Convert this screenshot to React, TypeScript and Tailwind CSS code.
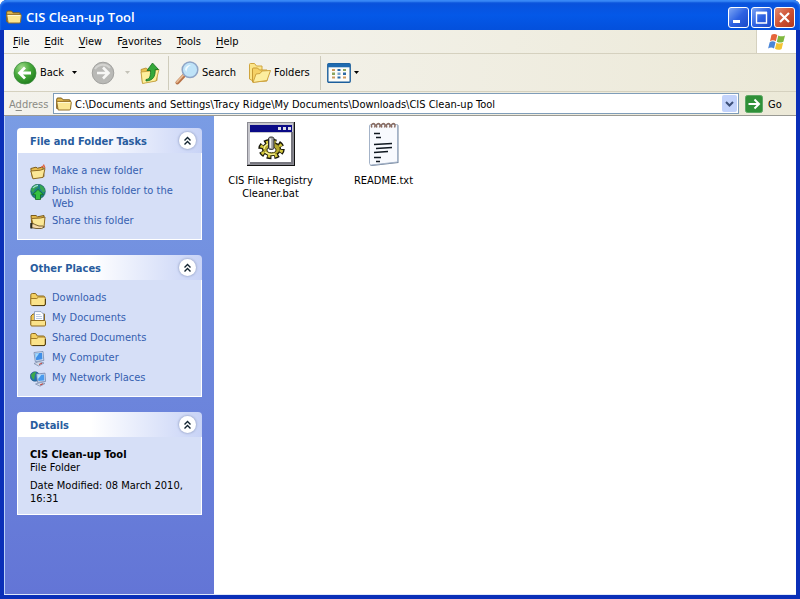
import { useState } from 'react';
import type { ReactNode } from 'react';

interface IconProps {
  className?: string;
}

const PATH = 'C:\\Documents and Settings\\Tracy Ridge\\My Documents\\Downloads\\CIS Clean-up Tool';

function FolderIcon({ className = 'size-4' }: IconProps) {
  return (
    <svg viewBox="0 0 16 16" className={className} aria-hidden="true">
      <path d="M.7 12.5V3.2c0-.8.4-1.2 1.2-1.2h3.6l1.6 1.8h6c.8 0 1.2.4 1.2 1.2v7.5z" fill="#e3b94a" stroke="#7a5c1c" />
      <path d="M2.2 14 .8 6.4c0-.6.3-1 1-1h12.4c.8 0 1.2.4 1.1 1.1L14.5 13c-.1.7-.5 1-1.2 1z" fill="#fbe793" stroke="#94702a" />
      <path d="M2 6.5h12" stroke="#fff9d2" />
    </svg>
  );
}

function PlainFolderIcon() {
  return (
    <svg viewBox="0 0 16 16" className="size-4" aria-hidden="true">
      <path d="M.8 12.8V4.2C.8 3 1.4 2.5 2.4 2.5h3.2L7.4 5h5.8c1 0 1.6.5 1.6 1.500v6.300z" fill="#f3cf62" stroke="#8a681d" />
      <path d="M2 14.500c-.8 0-1.200-.5-1.200-1.200V7.500h6L8.600 6h5.500c.8 0 1.200.4 1.200 1.100v6c0 .9-.5 1.400-1.300 1.400z" fill="#fbe38a" stroke="#a37d28" />
      <path d="M2.500 14.600H14c.8 0 1.400-.6 1.400-1.400V8" fill="none" stroke="#4d3a10" />
    </svg>
  );
}

function NewFolderIcon() {
  return (
    <svg viewBox="0 0 16 16" className="size-4" aria-hidden="true">
      <path d="M.8 4.500 6 3.200l1.500 1 5.500-1.200L14 12.500 2.500 14z" fill="#e6bb4c" stroke="#7b5b1b" />
      <path d="m.8 7 9.500-.8L15 4.500l-2 8.900L3 14.800z" fill="#fbe796" stroke="#8d6a24" />
      <path d="m11 3.500 3-2M13.500.5l1.500 3.500" fill="none" stroke="#e0603a" strokeWidth="1.200" />
    </svg>
  );
}

function PublishIcon() {
  return (
    <svg viewBox="0 0 16 16" className="size-4" aria-hidden="true">
      <circle cx="8" cy="7.500" r="7.300" fill="#1f7f86" stroke="#14564a" strokeWidth=".6" />
      <path d="M1 6c1-3 3-5 6-5.400L8 3 5 5 3 9zM10 1c3 1 5 3.500 5 6.500l-2 1-3-4z" fill="#37a651" />
      <path d="M3 4c1.500-2 3-2.500 5-2.700" fill="none" stroke="#a8dce8" strokeWidth="1.200" />
      <path d="m8 5.500 5.500 5.200h-3V15.500h-5v-4.800h-3z" fill="#35c23f" stroke="#116a22" strokeWidth=".8" />
    </svg>
  );
}

function ShareIcon() {
  return (
    <svg viewBox="0 0 16 16" className="size-4" aria-hidden="true">
      <path d="M1 1.500h5l1.500 1.300L14 1.500l-.5 10L2 12z" fill="#e6bb4c" stroke="#7b5b1b" />
      <path d="m1.500 4.500 9-.5 4.500-1-1 10-10 .5z" fill="#fbe796" stroke="#8d6a24" />
      <path d="M1 10.500c1-1 3-1 4 0l4 1.500h4l1.500 1-3 1.500H6L1 13.500z" fill="#f4d9a8" stroke="#5a4315" strokeWidth=".8" />
      <path d="M.3 9v5.500h2V9z" fill="#2b2b20" />
    </svg>
  );
}

function DocumentsIcon() {
  return (
    <svg viewBox="0 0 16 16" className="size-4" aria-hidden="true">
      <path d="M1 14V5l2-2h11.500v11z" fill="#eec65b" stroke="#8a681d" />
      <path d="M4.500 12V.6h6.500l2.500 2.500V12z" fill="#fff" stroke="#7d93b8" strokeWidth=".8" />
      <path d="M6 3.500h4.500M6 5.500h6M6 7.500h6" stroke="#b9c9e2" />
      <path d="M1.800 15C1 15 .8 14.500.8 13.800V9.500h13.800c.6 0 .9.400.9 1v3.500c0 .7-.5 1-1.100 1z" fill="#fbe38a" stroke="#8f6b20" />
    </svg>
  );
}

function ComputerIcon() {
  return (
    <svg viewBox="0 0 16 16" className="size-4" aria-hidden="true">
      <path d="m4 1.500 9-1 .8 9-8.500 1z" fill="#dce6f5" stroke="#7186ab" strokeWidth=".8" />
      <path d="m5 2.600 7-.8.500 6.500-6.500.9z" fill="#3f8fe8" />
      <path d="m5.200 2.600 4-.4-3.500 5z" fill="#a5dafa" />
      <path d="m4 12.500 5-2 5 1.500-5.500 3z" fill="#d3d9e6" stroke="#8090b0" strokeWidth=".8" />
      <path d="m9 13.500 3-1.400" stroke="#c03a35" />
    </svg>
  );
}

function NetworkIcon() {
  return (
    <svg viewBox="0 0 16 16" className="size-4" aria-hidden="true">
      <circle cx="5" cy="5.500" r="4.800" fill="#246fae" stroke="#184a6d" strokeWidth=".5" />
      <path d="M1 4c1-2 3-3.500 5-3l-1 3-1 5-2-2z" fill="#3eaa49" />
      <path d="m6.500 3 8.500-.8.500 8.300-8 .8z" fill="#dce6f5" stroke="#6b7fa8" strokeWidth=".8" />
      <path d="m7.500 4 6.500-.6.400 6-6 .7z" fill="#4a9bee" />
      <path d="m7.600 4 3.800-.3L8.200 8z" fill="#b5e2fb" />
      <path d="m5.500 13 5-1.500 4.500 1-5 2.700z" fill="#d3d9e6" stroke="#8090b0" strokeWidth=".8" />
      <path d="m10 14 3-1.200" stroke="#c03a35" />
    </svg>
  );
}

function BackIcon() {
  return (
    <svg viewBox="0 0 24 24" className="size-6" aria-hidden="true">
      <defs>
        <radialGradient id="backFill" cx=".35" cy=".25" r=".8">
          <stop offset="0" stopColor="#9ed989" />
          <stop offset=".5" stopColor="#46a83a" />
          <stop offset="1" stopColor="#1f7d1c" />
        </radialGradient>
      </defs>
      <circle cx="12" cy="12" r="11" fill="url(#backFill)" stroke="#37893a" strokeWidth=".8" />
      <path d="M18 12H7M12 6.500 6.500 12l5.500 5.500" fill="none" stroke="#fff" strokeWidth="2.800" />
    </svg>
  );
}

function ForwardIcon() {
  return (
    <svg viewBox="0 0 24 24" className="size-6" aria-hidden="true">
      <circle cx="12" cy="12" r="10.800" fill="#b9b9b6" stroke="#a2a29f" />
      <path d="M4 8c3-5 11-6 15-1" fill="none" stroke="#d3d3d0" strokeWidth="2" />
      <path d="M6 12h11M12 6.500l5.500 5.500-5.500 5.500" fill="none" stroke="#f7f7f5" strokeWidth="2.600" />
    </svg>
  );
}

function UpIcon() {
  return (
    <svg viewBox="0 0 20 22" className="h-6 w-5" aria-hidden="true">
      <path d="M1 7.500 6 6l2 1.500 9-1v12L2.500 21z" fill="#e9c14e" stroke="#b48a2b" strokeWidth=".8" />
      <path d="m1 10 10-1 8-1.500-3 11.500L2.500 21.500z" fill="#fdf09b" stroke="#c29a36" strokeWidth=".8" />
      <path d="M6 17.500c4-.5 4.500-3 4.500-9H7L12.500 1l6 6.500h-3.300c.2 7-2 11-9.200 11.500z" fill="#35a83a" stroke="#176d20" strokeWidth=".8" />
    </svg>
  );
}

function SearchIcon() {
  return (
    <svg viewBox="0 0 24 24" className="size-6" aria-hidden="true">
      <path d="m9.500 14-7 7.500" stroke="#b87348" strokeWidth="4" strokeLinecap="round" />
      <path d="m9 13.500-7 7.500" stroke="#eabf98" strokeWidth="1.800" strokeLinecap="round" />
      <circle cx="15" cy="8.800" r="7.800" fill="#bfe3f8" stroke="#8fa5c6" strokeWidth="1.500" />
      <path d="M10 8.500c.5-3 3-4.700 6-4.500-2 1-4.500 3.500-4.500 7z" fill="#f2fbff" />
    </svg>
  );
}

function FoldersIcon() {
  return (
    <svg viewBox="0 0 24 22" className="h-[22px] w-6" aria-hidden="true">
      <path d="M1.500 17V2.500c0-.8.500-1 1-1h4l2 2.500h5.500v4L5 19z" fill="#fbe58a" stroke="#d0a53e" />
      <path d="M4.500 20V7c0-.8.500-1 1-1h4l2 2h7.500v11z" fill="#f5d165" stroke="#c79b35" />
      <path d="M5 20.500 8 12l4-.5 2-2.500 8.500-.5-3.500 10z" fill="#fdeea0" stroke="#cfa43f" />
    </svg>
  );
}

function ViewsIcon() {
  return (
    <svg viewBox="0 0 24 20" className="h-5 w-6" aria-hidden="true">
      <rect x=".8" y=".8" width="22.400" height="18.400" rx="1" fill="#fdfdf8" stroke="#1c5f9c" strokeWidth="1.400" />
      <path d="M1 2.500h22" stroke="#1f6bb0" strokeWidth="3.600" />
      <path d="M5 6h3v2H5zM16 13.500h3v2h-3zM5 13.500h3v2H5z" fill="#cf9a5e" />
      <path d="M10.500 6h3v2h-3zM16 9.500h3v2.500h-3zM10.500 13.500h3v2h-3z" fill="#2c6aa5" />
      <path d="M16 6h3v2h-3zM5 9.500h3v2.500H5z" fill="#8ba65e" />
      <path d="M10.500 9.500h3v2.500h-3z" fill="#7aa6cf" />
    </svg>
  );
}

function WindowsFlag() {
  return (
    <svg viewBox="0 0 20 18" className="h-[18px] w-5" aria-hidden="true">
      <path d="M4.500 1.800C6.500.5 8.500.700 10.300 1.900L8.800 8.200C7 7 5 7 3 8.200z" fill="#e5653a" />
      <path d="M11.300 2.400c2 1.200 4.200 1.300 6.700.1l-1.600 6.200c-2.300 1.200-4.500 1.200-6.600 0z" fill="#7fb83f" />
      <path d="M2.700 9.200c2-1.200 4-1.200 5.800 0L7 15.400c-1.900-1.200-3.900-1.200-5.900 0z" fill="#4a86d8" />
      <path d="M9.500 9.700c2 1.200 4.300 1.200 6.600.1l-1.500 6.100c-2.300 1.200-4.500 1.200-6.600-.1z" fill="#f3c433" />
    </svg>
  );
}

function BatchFileIcon() {
  return (
    <svg viewBox="0 0 48 48" className="size-12" aria-hidden="true" shapeRendering="crispEdges">
      <path d="M0 2h48v44H0z" fill="#111" />
      <path d="M0 2h47v43H0z" fill="#8b8b93" />
      <path d="M1 3h45v41H1z" fill="#c6c6cc" />
      <path d="M3 5h42v7H3z" fill="#0a0a86" />
      <path d="M31 7h3v3h-3zM36 7h3v3h-3zM41 7h3v3h-3z" fill="#dcdce4" />
      <path d="M3 13h41v29H3z" fill="#fff" />
      <path d="M44 12h2v32H3v-2h41z" fill="#77777f" />
      <g shapeRendering="auto" fill="none">
        <ellipse cx="24.500" cy="29" rx="10.500" ry="7.500" stroke="#17160a" strokeWidth="5.500" strokeDasharray="4.400 2.700" />
        <ellipse cx="24.500" cy="29" rx="9" ry="6.500" fill="#b5a92e" stroke="#26230a" strokeWidth="1.500" />
        <ellipse cx="24.500" cy="29" rx="10.200" ry="7.200" stroke="#d3c73c" strokeWidth="3.400" strokeDasharray="2.600 4.340" strokeDashoffset="-.9" />
        <path d="M17 29c0-2.500 2-4.500 5-5M18 32c2 2 6 2.800 10 2" stroke="#f5ee8c" strokeWidth="1.500" />
        <ellipse cx="24.500" cy="30" rx="4.500" ry="2.800" fill="#fff" stroke="#3a3510" />
        <path d="M21.500 18.500c0-2 5.500-2 5.500 0V28c0 2-5.500 2-5.500 0z" fill="#9c9c9c" stroke="#2a2a2a" />
        <path d="M23.500 18.500V28" stroke="#f4f4f4" strokeWidth="1.500" />
      </g>
    </svg>
  );
}

function TextFileIcon() {
  return (
    <svg viewBox="0 0 48 48" className="size-12" aria-hidden="true">
      <path d="m10 6 27-1.500c1 0 1.500.500 1.500 1.500v37L12 46c-1.500 0-2-1-2-2z" fill="#71839b" />
      <path d="M9.500 6c0-1 .5-1.500 1.500-1.500h25c1 0 1.500.500 1.500 1.500v36l-26 3c-1.300 0-2-.5-2-1.500z" fill="#f8fafe" stroke="#a4b3c8" />
      <path
        d="M12 7.500c-1.500-2 0-4 1.500-4s2 2 1 4M17 7.500c-1.500-2 0-4 1.500-4s2 2 1 4M22 7.500c-1.500-2 0-4 1.500-4s2 2 1 4M27 7.500c-1.500-2 0-4 1.500-4s2 2 1 4M32 7.500c-1.500-2 0-4 1.500-4s2 2 1 4"
        fill="none"
        stroke="#8b6d62"
        strokeWidth="1.500"
      />
      <path d="M14 13.500h6M16 17.500h5M14 24.500l18-1M16 28.500l16-1M14 32.500l14-1M14 37.500h7M16 41.500h4" stroke="#101820" strokeWidth="1.300" />
    </svg>
  );
}

function Caret({ className = 'text-black' }: IconProps) {
  return (
    <svg viewBox="0 0 5 3" className={`h-[3px] w-[5px] ${className}`} aria-hidden="true">
      <path d="M0 0h5L2.500 3z" fill="currentColor" />
    </svg>
  );
}

function MenuItem({ label, hot }: { label: string; hot: number }) {
  return (
    <button type="button" className="h-5">
      {label.slice(0, hot)}
      <span className="underline underline-offset-2">{label[hot]}</span>
      {label.slice(hot + 1)}
    </button>
  );
}

function CaptionButton({ label, close, children }: { label: string; close?: boolean; children: ReactNode }) {
  return (
    <button
      type="button"
      aria-label={label}
      className={`size-[21px] rounded-[3px] border border-white flex items-center justify-center bg-linear-to-br ${
        close ? 'from-[#e08a70] via-[#cf5233] to-[#b0391f]' : 'from-[#7fa5f3] via-[#2e62e2] to-[#1a49c8]'
      }`}
    >
      <svg viewBox="0 0 19 19" className="size-[19px]" fill="none" stroke="#fff" aria-hidden="true">
        {children}
      </svg>
    </button>
  );
}

function Panel({ title, children }: { title: string; children: ReactNode }) {
  const [open, setOpen] = useState(true);

  return (
    <section>
      <div className="flex h-[25px] items-center justify-between rounded-t-[4px] bg-linear-to-r from-white from-40% to-[#c8d3f6] pl-[13px] pr-[6px]">
        <h2 className="pt-[2px] font-bold text-[#285c9e]">{title}</h2>
        <button
          type="button"
          aria-label={`Toggle ${title}`}
          aria-expanded={open}
          onClick={() => setOpen(!open)}
          className="flex size-[17px] items-center justify-center rounded-full bg-white shadow-[0_0_2px_1px_#a9b5d6]"
        >
          <svg viewBox="0 0 9 10" className="h-[10px] w-[9px]" fill="none" stroke="#10222f" strokeWidth="1.400" aria-hidden="true">
            <path d="m1.500 4.500 3-3 3 3M1.500 8.500l3-3 3 3" />
          </svg>
        </button>
      </div>
      {open && <div className="border border-t-0 border-white bg-[#d6dff7] px-3 pt-[11px] pb-[9px]">{children}</div>}
    </section>
  );
}

function TaskList({ items }: { items: { label: string; icon: ReactNode }[] }) {
  return (
    <ul className="flex flex-col gap-1">
      {items.map((item) => (
        <li key={item.label}>
          <a href="#" className="flex min-h-4 items-start gap-[6px] text-[#3560b0]">
            <span className="shrink-0">{item.icon}</span>
            <span className="pr-4">{item.label}</span>
          </a>
        </li>
      ))}
    </ul>
  );
}

const folderTasks = [
  { label: 'Make a new folder', icon: <NewFolderIcon /> },
  { label: 'Publish this folder to the Web', icon: <PublishIcon /> },
  { label: 'Share this folder', icon: <ShareIcon /> },
];

const otherPlaces = [
  { label: 'Downloads', icon: <PlainFolderIcon /> },
  { label: 'My Documents', icon: <DocumentsIcon /> },
  { label: 'Shared Documents', icon: <PlainFolderIcon /> },
  { label: 'My Computer', icon: <ComputerIcon /> },
  { label: 'My Network Places', icon: <NetworkIcon /> },
];

const files = [
  { label: 'CIS File+Registry Cleaner.bat', icon: <BatchFileIcon /> },
  { label: 'README.txt', icon: <TextFileIcon /> },
];

export default function App() {
  const [address, setAddress] = useState(PATH);

  return (
    <div className="flex min-h-screen flex-col rounded-t-[7px] bg-[#0a2fb8] font-['DejaVu_Sans_Condensed','DejaVu_Sans',sans-serif] text-[11px] leading-[13px] text-black">
      <header className="flex h-[30px] items-center gap-1 rounded-t-[7px] bg-linear-to-b from-[#0a50d8] via-[#0458e8] to-[#0350dc] pl-[6px] pr-[5px] pt-1 shadow-[inset_0_2px_2px_#3c8cf8]">
        <FolderIcon />
        <h1 className="flex-1 text-[13px] leading-4 font-semibold text-white font-['Open_Sans',sans-serif]">CIS Clean-up Tool</h1>
        <div className="flex gap-[2px]">
          <CaptionButton label="Minimize">
            <path d="M4 13.500h7" strokeWidth="3" />
          </CaptionButton>
          <CaptionButton label="Maximize">
            <path d="M4 4.500h11M4.500 4v11h10V4" strokeWidth="1.400" />
            <path d="M4 5h11" strokeWidth="2.500" />
          </CaptionButton>
          <CaptionButton label="Close" close>
            <path d="m5 5 9 9M14 5l-9 9" strokeWidth="2.200" />
          </CaptionButton>
        </div>
      </header>

      <div className="mx-1 mb-1 flex flex-1 flex-col border-b border-[#dfe8fb] bg-[#efecdf]">
        <div className="flex h-6 items-stretch border-b border-[#d5d1bf] bg-linear-to-r from-[#f7f7f4] to-[#ece9d8]">
          <nav className="flex flex-1 items-center gap-[15px] pl-[9px]">
            <MenuItem label="File" hot={0} />
            <MenuItem label="Edit" hot={0} />
            <MenuItem label="View" hot={0} />
            <MenuItem label="Favorites" hot={1} />
            <MenuItem label="Tools" hot={0} />
            <MenuItem label="Help" hot={0} />
          </nav>
          <div className="flex w-10 items-center justify-center border-l border-[#d5d1bf] bg-white">
            <WindowsFlag />
          </div>
        </div>

        <div className="flex h-[38px] items-center border-b border-[#d5d1bf] bg-linear-to-r from-[#f6f5f1] to-[#ece9d8] pl-[9px]">
          <button type="button" className="flex items-center gap-[3px]">
            <BackIcon />
            Back
          </button>
          <button type="button" aria-label="Back history" className="ml-2">
            <Caret />
          </button>
          <button type="button" aria-label="Forward" className="ml-[14px]">
            <ForwardIcon />
          </button>
          <button type="button" aria-label="Forward history" className="ml-[10px]">
            <Caret className="text-[#c4c2b8]" />
          </button>
          <button type="button" aria-label="Up" className="ml-[10px]">
            <UpIcon />
          </button>
          <div className="ml-2 h-[34px] w-px bg-[#cfccbc]" />
          <button type="button" className="ml-[6px] flex items-center gap-[3px]">
            <SearchIcon />
            Search
          </button>
          <button type="button" className="ml-3 flex items-center gap-[2px]">
            <FoldersIcon />
            Folders
          </button>
          <div className="ml-[10px] h-[34px] w-px bg-[#cfccbc]" />
          <button type="button" aria-label="Views" className="ml-[6px] flex items-center gap-[3px]">
            <ViewsIcon />
            <Caret />
          </button>
        </div>

        <div className="flex h-6 items-center border-b border-[#9a9a94] bg-linear-to-r from-[#f3f2ec] to-[#ece9d8] pl-[5px]">
          <label htmlFor="address" className="w-11 pt-px text-[#8b8b84]">
            A<span className="underline underline-offset-2">d</span>dress
          </label>
          <div className="flex h-[21px] flex-1 items-center border border-[#7f9db9] bg-white pl-[2px] pr-px">
            <FolderIcon />
            <input
              id="address"
              type="text"
              value={address}
              onChange={(e) => setAddress(e.target.value)}
              className="ml-[3px] min-w-0 flex-1 pt-[2px] outline-none"
            />
            <button type="button" aria-label="Address history" className="flex h-[17px] w-[15px] items-center justify-center rounded-[2px] bg-[#c3d3fb]">
              <svg viewBox="0 0 9 6" className="h-[6px] w-[9px]" fill="none" stroke="#3c4f78" strokeWidth="2" aria-hidden="true">
                <path d="m1 1 3.500 3.500L8 1" />
              </svg>
            </button>
          </div>
          <button type="button" className="ml-[6px] flex w-[51px] items-center gap-[5px]">
            <svg viewBox="0 0 18 18" className="size-[18px]" aria-hidden="true">
              <rect x=".5" y=".5" width="17" height="17" rx="2" fill="#2f9038" stroke="#5da765" />
              <path d="M3.500 9H14M9.500 4.500 14 9l-4.500 4.500" fill="none" stroke="#fff" strokeWidth="2" />
            </svg>
            <span className="pt-px">Go</span>
          </button>
        </div>

        <div className="flex flex-1">
          <aside className="flex w-[210px] shrink-0 flex-col gap-[15px] border-l border-[#b9d0f8] bg-linear-to-b from-[#7a9ce4] to-[#6375d6] px-3 pt-3">
            <Panel title="File and Folder Tasks">
              <TaskList items={folderTasks} />
            </Panel>
            <Panel title="Other Places">
              <TaskList items={otherPlaces} />
            </Panel>
            <Panel title="Details">
              <p className="font-bold">CIS Clean-up Tool</p>
              <p>File Folder</p>
              <p className="mt-[5px]">Date Modified: 08 March 2010, 16:31</p>
            </Panel>
          </aside>

          <main className="flex flex-1 flex-wrap content-start bg-white pt-1">
            {files.map((file) => (
              <button key={file.label} type="button" className="flex w-[113px] flex-col items-center gap-[6px] px-3">
                {file.icon}
                <span>{file.label}</span>
              </button>
            ))}
          </main>
        </div>
      </div>
    </div>
  );
}
